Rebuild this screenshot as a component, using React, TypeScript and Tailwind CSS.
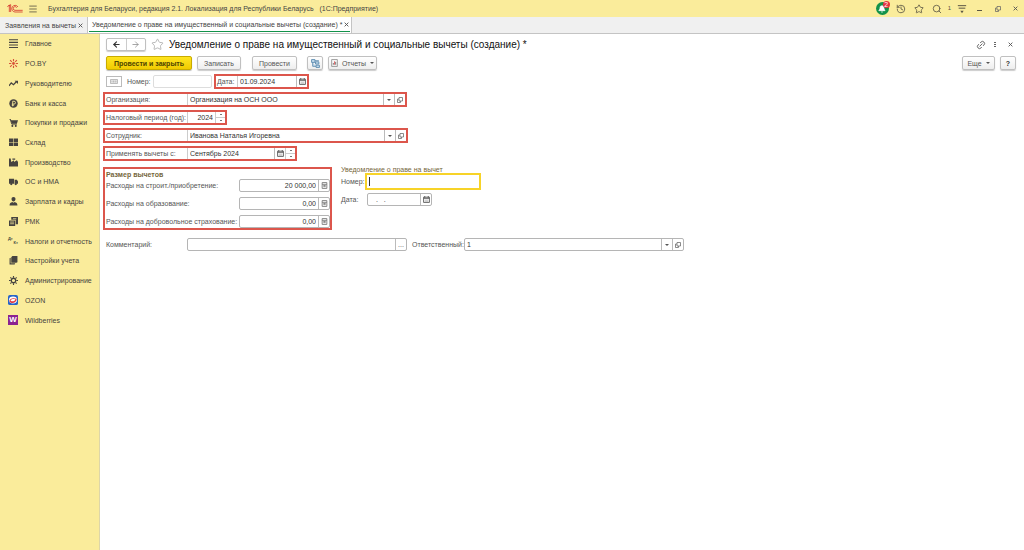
import { useState } from "react";
import type { ReactNode } from "react";
import { ArrowLeft, ArrowRight, Bell, History, Link2, Menu, Search, Star } from "lucide-react";

const icons: Record<string, ReactNode> = {
  main: <path d="M0 1.500h16M0 6h16M0 10.500h16M0 15h16" stroke="currentColor" strokeWidth="1.800" />,
  po: (
    <g stroke="#d8513b" strokeWidth="2" fill="none">
      <path d="M8 0v4M8 12v4M0 8h4M12 8h4M2 2l3 3M14 2l-3 3M2 14l3-3M14 14l-3-3" />
      <circle cx="8" cy="8" r="1.5" fill="#d8513b" />
    </g>
  ),
  manager: (
    <>
      <path d="M0 12l4-5 4 3 5-5" stroke="currentColor" strokeWidth="2.2" fill="none" />
      <path d="M10 3h6v6z" />
    </>
  ),
  bank: (
    <>
      <circle cx="8" cy="8" r="7.5" />
      <path d="M6.5 13V4H9a2.4 2.4 0 010 5H5M5 11h4" stroke="#faec9b" strokeWidth="1.5" fill="none" />
    </>
  ),
  cart: (
    <>
      <path d="M0 2h3l1 2h12l-2 6H5L3 4z" />
      <path d="M2 2l3 9h9" stroke="currentColor" strokeWidth="1.5" fill="none" />
      <circle cx="6" cy="14" r="1.8" />
      <circle cx="12" cy="14" r="1.8" />
    </>
  ),
  stock: <path d="M0 1h7.500v6H0zM8.500 1H16v6H8.500zM0 8h7.500v6H0zM8.500 8H16v6H8.500z" />,
  factory: <path d="M0 15V1h3l1 6 5-3v3l5-3 2 3v8zM6 1h5v2H6z" />,
  truck: (
    <>
      <path d="M0 3h9v9H0zM10 5h4l2 3v4h-6z" />
      <circle cx="4" cy="12.500" r="2" />
      <circle cx="12" cy="12.500" r="2" />
    </>
  ),
  person: <path d="M8 0a3.500 3.500 0 013.500 4c0 2-1.500 4-3.500 4S4.500 6 4.500 4A3.500 3.500 0 018 0zM1 15c0-4 2-5 5-6l2 1 2-1c3 1 5 2 5 6z" />,
  rmk: (
    <>
      <path d="M0 6h11v10H0zM4 0h12v13h-4V5H4z" />
      <path d="M2 9h7M2 12h7M7 3h6" stroke="#faec9b" strokeWidth="1.3" />
    </>
  ),
  books: <path d="M1 4l2-1v10h8l-1 2H1zM4 2l2-2h9v11l-2 1H4z" />,
  gear: (
    <g fill="none" stroke="currentColor">
      <circle cx="8" cy="8" r="4" strokeWidth="2.400" />
      <path d="M8 0v3M8 13v3M0 8h3M13 8h3M2.500 2.500l2 2M11.500 11.500l2 2M13.500 2.500l-2 2M4.500 11.500l-2 2" strokeWidth="2" />
    </g>
  ),
  ozon: (
    <>
      <rect width="16" height="16" rx="3" fill="#2864c8" />
      <ellipse cx="8" cy="8" rx="6.500" ry="5.500" fill="#fff" />
      <path d="M2 10c1-5 6-6 12-4 0 6-8 10-12 4z" fill="#e1373f" />
      <path d="M4 9c2-3 5-3 8-2-2 3-5 4-8 2z" fill="#fff" />
    </>
  ),
};

const menu = [
  { icon: "main", title: "Главное" },
  { icon: "po", title: "PO.BY" },
  { icon: "manager", title: "Руководителю" },
  { icon: "bank", title: "Банк и касса" },
  { icon: "cart", title: "Покупки и продажи" },
  { icon: "stock", title: "Склад" },
  { icon: "factory", title: "Производство" },
  { icon: "truck", title: "ОС и НМА" },
  { icon: "person", title: "Зарплата и кадры" },
  { icon: "rmk", title: "РМК" },
  { icon: "taxes", title: "Налоги и отчетность" },
  { icon: "books", title: "Настройки учета" },
  { icon: "gear", title: "Администрирование" },
  { icon: "ozon", title: "OZON" },
  { icon: "wb", title: "Wildberries" },
];

function MenuIcon({ name }: { name: string }) {
  if (name === "wb") {
    return <span className="flex h-[10px] w-[10px] items-center justify-center bg-[#8b2391] text-[8px] leading-none font-bold text-white">W</span>;
  }
  if (name === "taxes") {
    return (
      <span className="flex w-[10px] flex-col text-[4px] leading-[4px] font-bold">
        <span>Дт</span>
        <span className="text-right">Кт</span>
      </span>
    );
  }
  const size = name === "ozon" ? "h-[10px] w-[10px]" : "h-[9px] w-[9px]";
  return (
    <svg viewBox="0 0 16 16" fill="currentColor" className={size}>
      {icons[name]}
    </svg>
  );
}

function Logo() {
  return (
    <svg viewBox="0 0 48 27" className="h-[9px] w-4" fill="none" stroke="#d5392e" strokeWidth="2.500">
      <path d="M1 8l6-5v21M11 24V2L5 6" />
      <path d="M33 9a10 10 0 10-9 15h23M29 11a5.500 5.500 0 10-5 8h23" />
    </svg>
  );
}

function CalendarIcon() {
  return (
    <svg viewBox="0 0 12 12" className="h-[7px] w-[7px]" fill="none" stroke="#555" strokeWidth="1.500">
      <path d="M1 2h10v9H1zM1 4h10M3 0v3M9 0v3" />
      <path d="M3 7h6M3 9h6" stroke="#999" strokeWidth="1" />
    </svg>
  );
}

function CalcIcon() {
  return (
    <svg viewBox="0 0 12 12" className="h-[7px] w-[7px]" fill="none" stroke="#777" strokeWidth="1.500">
      <path d="M2 1h8v10H2zM2 4h8M4 6h4M4 8h4" />
    </svg>
  );
}

function OpenIcon() {
  return (
    <svg viewBox="0 0 12 12" className="h-[6px] w-[6px]" fill="none" stroke="#666" strokeWidth="1.500">
      <path d="M4 1h7v7H4zM4 4H1v7h6V8" />
    </svg>
  );
}

function Caret() {
  return (
    <svg viewBox="0 0 8 8" className="h-1 w-1 shrink-0" fill="#555">
      <path d="M0 2h8L4 6z" />
    </svg>
  );
}

function Cross() {
  return (
    <svg viewBox="0 0 8 8" className="h-[5px] w-[5px] shrink-0" stroke="#555" strokeWidth="1.500">
      <path d="M1 1l6 6M7 1L1 7" />
    </svg>
  );
}

function Adorn({ label, children }: { label: string; children: ReactNode }) {
  return (
    <button type="button" aria-label={label} className="flex w-[11px] shrink-0 items-center justify-center border-l border-[#bbb]">
      {children}
    </button>
  );
}

function Spinner() {
  return (
    <span className="flex w-[10px] shrink-0 flex-col border-l border-[#ccc]">
      <button type="button" aria-label="Больше" className="flex flex-1 items-center justify-center border-b border-[#ccc]">
        <span className="h-px w-[2px] bg-[#777]" />
      </button>
      <button type="button" aria-label="Меньше" className="flex flex-1 items-center justify-center">
        <span className="h-px w-[2px] bg-[#777]" />
      </button>
    </span>
  );
}

type FieldProps = {
  id: string;
  value?: string;
  frame?: string;
  align?: string;
  children?: ReactNode;
};

function Field({ id, value = "", frame = "h-[13px] rounded-[2px] border border-[#b5b5b5]", align = "", children }: FieldProps) {
  const [text, setText] = useState(value);
  return (
    <span className={`flex min-w-0 flex-1 bg-white ${frame}`}>
      <input
        id={id}
        value={text}
        onChange={(e) => setText(e.target.value)}
        className={`w-full min-w-0 flex-1 px-[2px] text-[#333] outline-none ${align}`}
      />
      {children}
    </span>
  );
}

// Inputs inside a red frame share the frame's height and only keep the left edge
const inner = "h-full border-l border-[#ccc]";

function FramedRow({ id, label, width, children }: { id: string; label: string; width: string; children: ReactNode }) {
  return (
    <div className={`flex h-[15px] items-stretch border-2 border-[#dc564c] ${width}`}>
      <label htmlFor={id} className="flex w-[82px] shrink-0 items-center pl-px whitespace-nowrap">
        {label}
      </label>
      {children}
    </div>
  );
}

const button =
  "flex h-[14px] items-center justify-center gap-1 rounded-[2px] border border-[#c0c0c0] bg-linear-to-b from-white to-[#eee] whitespace-nowrap shadow-[0_1px_1px_#ccc]";

export default function App() {
  return (
    <div className="flex min-h-screen flex-col bg-white font-['Liberation_Sans',Arial,sans-serif] text-[7px] leading-[9px] text-[#555]">
      <header className="flex h-[17px] items-center bg-[#faec9b] pr-[5px] pl-[7px] text-[#5c5745]">
        <Logo />
        <button type="button" aria-label="Меню" className="ml-[5px]">
          <Menu size={10} strokeWidth={2} />
        </button>
        <span className="ml-[10px] whitespace-pre text-[#444]">
          Бухгалтерия для Беларуси, редакция 2.1. Локализация для Республики Беларусь   (1С:Предприятие)
        </span>
        <div className="ml-auto flex items-center">
          <button type="button" aria-label="Уведомления" className="relative flex h-[13px] w-[13px] items-center justify-center rounded-full bg-[#12924a] text-white">
            <Bell size={8} fill="white" />
            <span className="absolute -top-px -right-px flex h-[7px] w-[7px] items-center justify-center rounded-full bg-[#e5333c] text-[7px] leading-none">2</span>
          </button>
          <button type="button" aria-label="История" className="ml-[7px]">
            <History size={10} />
          </button>
          <button type="button" aria-label="Избранное" className="ml-2">
            <Star size={10} />
          </button>
          <button type="button" aria-label="Поиск" className="ml-2 flex items-center gap-[6px] text-[6px]">
            <Search size={10} />1
          </button>
          <button type="button" aria-label="Настройки" className="ml-[6px]">
            <svg viewBox="0 0 12 12" className="h-[10px] w-[10px]" fill="none" stroke="currentColor" strokeWidth="1.200">
              <path d="M1 2h10M2 5h8" />
              <path d="M4 8h4l-2 3z" fill="currentColor" strokeWidth="0" />
            </svg>
          </button>
          <button type="button" aria-label="Свернуть" className="ml-[10px]">
            <span className="mt-1 block h-px w-[5px] bg-current" />
          </button>
          <button type="button" aria-label="Развернуть" className="ml-[13px]">
            <OpenIcon />
          </button>
          <button type="button" aria-label="Закрыть" className="ml-3 pr-px">
            <Cross />
          </button>
        </div>
      </header>

      <nav className="flex h-[17px] border-b border-[#c4c4c4] bg-[#f0f0f0] text-[#444]">
        <a href="#list" className="flex w-[88px] items-center justify-between border-r border-[#c4c4c4] pr-1 pl-[5px] whitespace-nowrap">
          Заявления на вычеты
          <Cross />
        </a>
        <a href="#form" className="flex w-[264px] border-r border-[#c4c4c4] bg-white px-px pb-px whitespace-nowrap">
          <span className="flex flex-1 items-center justify-between border-b border-b-[#12924a] pr-px pl-[3px]">
            Уведомление о праве на имущественный и социальные вычеты (создание) *
            <Cross />
          </span>
        </a>
      </nav>

      <div className="flex flex-1">
        <aside className="w-[100px] shrink-0 border-r border-[#ddd6a8] bg-[#faec9b]">
          <ul className="grid h-[296px] auto-rows-fr text-[#464340]">
            {menu.map((item) => (
              <li key={item.title} className="flex">
                <a href="#section" className="flex flex-1 items-center gap-[7px] pl-2 whitespace-nowrap">
                  <span className="flex w-[10px] justify-center">
                    <MenuIcon name={item.icon} />
                  </span>
                  {item.title}
                </a>
              </li>
            ))}
          </ul>
        </aside>

        <main className="min-w-0 flex-1 pt-1 pr-2 pl-[3px]">
          <div className="flex h-[13px] items-center pl-[3px]">
            <div className="flex h-[13px] w-10 rounded-[2px] border border-[#c0c0c0] shadow-[0_1px_1px_#ccc]">
              <button type="button" aria-label="Назад" className="flex flex-1 items-center justify-center border-r border-[#ccc] text-[#333]">
                <ArrowLeft size={9} strokeWidth={3} />
              </button>
              <button type="button" aria-label="Вперед" className="flex flex-1 items-center justify-center text-[#888]">
                <ArrowRight size={9} />
              </button>
            </div>
            <button type="button" aria-label="В избранное" className="ml-[5px] text-[#aaa]">
              <Star size={13} strokeWidth={1.5} />
            </button>
            <h1 className="ml-[5px] text-[10px] leading-3 whitespace-nowrap text-[#111]">
              Уведомление о праве на имущественный и социальные вычеты (создание) *
            </h1>
            <div className="ml-auto flex items-center pr-[3px]">
              <button type="button" aria-label="Ссылка">
                <Link2 size={10} className="-rotate-45" />
              </button>
              <button type="button" aria-label="Еще действия" className="ml-2 flex flex-col gap-px">
                <span className="h-px w-[2px] bg-[#666]" />
                <span className="h-px w-[2px] bg-[#666]" />
                <span className="h-px w-[2px] bg-[#666]" />
              </button>
              <button type="button" aria-label="Закрыть форму" className="ml-3">
                <Cross />
              </button>
            </div>
          </div>

          <div className="mt-[5px] flex pl-[3px]">
            <button type="button" className="flex h-[14px] w-[86px] items-center justify-center rounded-[2px] border border-[#c9ab00] bg-linear-to-b from-[#ffe51e] to-[#f0cb00] font-bold whitespace-nowrap text-[#4d4400] shadow-[0_1px_1px_#bbb]">
              Провести и закрыть
            </button>
            <button type="button" className={`ml-[5px] w-11 ${button}`}>Записать</button>
            <button type="button" className={`ml-[11px] w-[45px] ${button}`}>Провести</button>
            <button type="button" aria-label="Структура" className={`ml-[10px] w-4 ${button}`}>
              <svg viewBox="0 0 16 16" className="h-[9px] w-[9px]" fill="#c4dced" stroke="#5687ad" strokeWidth="1.500">
                <path d="M1 1h6v5H1zM8 5h6v4H8zM9 11h6v4H9zM3 6v7h6M7 3h7" />
              </svg>
            </button>
            <button type="button" className={`ml-[5px] w-[49px] ${button}`}>
              <svg viewBox="0 0 12 14" className="h-2 w-[7px]" fill="none" stroke="#777" strokeWidth="1.200">
                <path d="M1 1h10v12H1z" />
                <path d="M4 10V7M8 10V5" stroke="#444" />
                <path d="M6 10V4" stroke="#d33" />
              </svg>
              Отчеты
              <Caret />
            </button>
            <button type="button" className={`ml-auto w-[33px] ${button}`}>
              Еще
              <Caret />
            </button>
            <button type="button" className={`ml-[5px] w-4 font-bold text-[#333] ${button}`}>?</button>
          </div>

          <div className="mt-1 flex h-[15px] items-center pl-[3px]">
            <button type="button" aria-label="Статус" className="flex h-[11px] w-4 items-center justify-center border border-[#bbb]">
              <svg viewBox="0 0 16 10" className="h-[5px] w-2" fill="#eee" stroke="#aaa" strokeWidth="1.500">
                <path d="M1 1h14v8H1zM4 3v4M7 3v4M10 3v4M12 3v4" />
              </svg>
            </button>
            <label htmlFor="number" className="ml-[5px] w-[26px]">Номер:</label>
            <span className="flex w-[59px]">
              <Field id="number" frame="h-[13px] rounded-[2px] border border-[#ddd]" />
            </span>
            <div className="ml-[2px] flex h-[15px] w-[95px] border-2 border-[#dc564c]">
              <label htmlFor="date" className="flex w-[21px] items-center pl-px">Дата:</label>
              <Field id="date" value="01.09.2024" frame={inner}>
                <Adorn label="Выбрать дату"><CalendarIcon /></Adorn>
              </Field>
            </div>
          </div>

          <div className="mt-[3px] flex flex-col gap-[3px]">
            <FramedRow id="org" label="Организация:" width="w-[304px]">
              <Field id="org" value="Организация на ОСН ООО" frame={inner}>
                <Adorn label="Выбрать организацию"><Caret /></Adorn>
                <Adorn label="Открыть организацию"><OpenIcon /></Adorn>
              </Field>
            </FramedRow>
            <FramedRow id="year" label="Налоговый период (год):" width="w-[124px]">
              <Field id="year" value="2024" frame={inner} align="text-right">
                <Spinner />
              </Field>
            </FramedRow>
            <FramedRow id="employee" label="Сотрудник:" width="w-[305px]">
              <Field id="employee" value="Иванова Наталья Игоревна" frame={inner}>
                <Adorn label="Выбрать сотрудника"><Caret /></Adorn>
                <Adorn label="Открыть сотрудника"><OpenIcon /></Adorn>
              </Field>
            </FramedRow>
            <FramedRow id="month" label="Применять вычеты с:" width="w-[194px]">
              <Field id="month" value="Сентябрь 2024" frame={inner}>
                <Adorn label="Выбрать месяц"><CalendarIcon /></Adorn>
                <Spinner />
              </Field>
            </FramedRow>
          </div>

          <div className="mt-[5px] flex items-start">
            <section className="mt-px w-[229px] border-2 border-[#dc564c] pt-px pl-px">
              <h2 className="font-bold text-[#75663c]">Размер вычетов</h2>
              <div className="flex flex-col gap-[5px]">
                {[
                  { id: "housing", label: "Расходы на строит./приобретение:", value: "20 000,00" },
                  { id: "education", label: "Расходы на образование:", value: "0,00" },
                  { id: "insurance", label: "Расходы на добровольное страхование:", value: "0,00" },
                ].map((row) => (
                  <div key={row.id} className="flex items-center">
                    <label htmlFor={row.id} className="w-[133px] whitespace-nowrap">{row.label}</label>
                    <Field id={row.id} value={row.value} align="text-right">
                      <Adorn label="Калькулятор"><CalcIcon /></Adorn>
                    </Field>
                  </div>
                ))}
              </div>
            </section>

            <section className="ml-[9px] w-[140px]">
              <h2 className="leading-[7px] text-[#75663c]">Уведомление о праве на вычет</h2>
              <div className="flex items-center">
                <label htmlFor="notice-number" className="w-6">Номер:</label>
                <span className="flex flex-1 border-2 border-[#f7d328]">
                  <span className="my-[2px] ml-[2px] w-px bg-[#333]" />
                  <Field id="notice-number" frame="h-[13px]" />
                </span>
              </div>
              <div className="mt-[3px] flex items-center">
                <label htmlFor="notice-date" className="w-[26px]">Дата:</label>
                <span className="flex w-[65px]">
                  <Field id="notice-date" value="  .   ." align="pl-1">
                    <Adorn label="Выбрать дату"><CalendarIcon /></Adorn>
                  </Field>
                </span>
              </div>
            </section>
          </div>

          <div className="mt-2 flex items-center pl-[3px]">
            <label htmlFor="comment" className="w-[81px]">Комментарий:</label>
            <span className="flex w-[220px]">
              <Field id="comment">
                <Adorn label="Редактировать комментарий">...</Adorn>
              </Field>
            </span>
            <label htmlFor="responsible" className="ml-[5px] w-[52px] whitespace-nowrap">Ответственный:</label>
            <span className="flex w-[220px]">
              <Field id="responsible" value="1">
                <Adorn label="Выбрать ответственного"><Caret /></Adorn>
                <Adorn label="Открыть ответственного"><OpenIcon /></Adorn>
              </Field>
            </span>
          </div>
        </main>
      </div>
    </div>
  );
}
